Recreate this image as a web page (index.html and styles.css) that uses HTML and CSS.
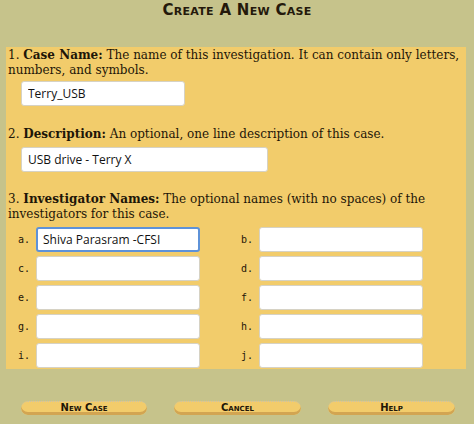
FILE: index.html
```html
<!DOCTYPE html>
<html>
<head>
<meta charset="utf-8">
<link rel="stylesheet" href="styles.css">
</head>
<body>
<h1 class="title">Create A New Case</h1>
<div class="panel">
  <div class="section s1">
    <p class="desc">1. <b>Case Name:</b> The name of this investigation. It can contain only letters, numbers, and symbols.</p>
    <div class="field"><input class="inp w-short" type="text" value="Terry_USB"></div>
  </div>
  <div class="section s2">
    <p class="desc">2. <b>Description:</b> An optional, one line description of this case.</p>
    <div class="field f2"><input class="inp w-long" type="text" value="USB drive - Terry X"></div>
  </div>
  <div class="section s3">
    <p class="desc">3. <b>Investigator Names:</b> The optional names (with no spaces) of the investigators for this case.</p>
    <div class="grid">
      <span class="lbl">a.</span><input class="inp focus" type="text" value="Shiva Parasram -CFSI">
      <span class="lbl">b.</span><input class="inp" type="text">
      <span class="lbl">c.</span><input class="inp" type="text">
      <span class="lbl">d.</span><input class="inp" type="text">
      <span class="lbl">e.</span><input class="inp" type="text">
      <span class="lbl">f.</span><input class="inp" type="text">
      <span class="lbl">g.</span><input class="inp" type="text">
      <span class="lbl">h.</span><input class="inp" type="text">
      <span class="lbl">i.</span><input class="inp" type="text">
      <span class="lbl">j.</span><input class="inp" type="text">
    </div>
  </div>
</div>
<div class="buttons">
  <div class="btn">New Case</div>
  <div class="btn">Cancel</div>
  <div class="btn">Help</div>
</div>
</body>
</html>
```

FILE: styles.css
```css
html, body {
  margin: 0;
  padding: 0;
  background: #c6c38b;
  width: 474px;
  height: 424px;
  overflow: hidden;
}
.title {
  margin: 0;
  height: 47px;
  box-sizing: border-box;
  padding-top: 1px;
  text-align: center;
  font-family: "DejaVu Sans", sans-serif;
  font-variant: small-caps;
  font-weight: bold;
  font-size: 15px;
  line-height: 18px;
  color: #24190b;
  letter-spacing: 0.3px;
}
.panel {
  margin-left: 6px;
  width: 460px;
  background: #f2cc6b;
  padding: 1px 0 1px 2px;
  box-sizing: border-box;
  font-family: "DejaVu Serif", serif;
  font-size: 12px;
  color: #1e1608;
}
.desc {
  margin: 0;
  line-height: 15px;
}
.s2 { margin-top: 21px; }
.s3 { margin-top: 20px; }
.field {
  margin-top: 3px;
  padding-left: 13px;
}
.f2 { margin-top: 5px; }
.inp {
  display: block;
  box-sizing: border-box;
  height: 25px;
  width: 164px;
  margin: 0;
  padding: 0 6px;
  border: 1px solid #d6d2c4;
  border-radius: 3px;
  background: #fff;
  font-family: "Open Sans", sans-serif;
  font-size: 12px;
  color: #111;
  outline: none;
}
.w-long { width: 247px; }
.focus {
  border: 2px solid #5e92d8;
  padding: 0 5px;
}
.grid {
  margin-top: 5px;
  display: grid;
  grid-template-columns: 28px 164px 59px 164px;
  grid-auto-rows: 25px;
  row-gap: 4px;
}
.lbl {
  font-family: "DejaVu Sans Mono", monospace;
  font-size: 10px;
  color: #1e1608;
  text-align: right;
  padding-right: 6px;
  line-height: 25px;
}
.buttons {
  display: grid;
  grid-template-columns: 126px 127px 127px;
  column-gap: 27px;
  padding-left: 21px;
  margin-top: 32px;
}
.btn {
  height: 14px;
  box-sizing: border-box;
  background: #f2cc6b;
  border-top: 1px dotted #c9c2ac;
  border-radius: 7px;
  box-shadow: inset 0 -3px 0 #d2a552;
  text-align: center;
  font-family: "DejaVu Sans", sans-serif;
  font-weight: bold;
  font-variant: small-caps;
  font-size: 10px;
  line-height: 11px;
  color: #1e1608;
}
```
